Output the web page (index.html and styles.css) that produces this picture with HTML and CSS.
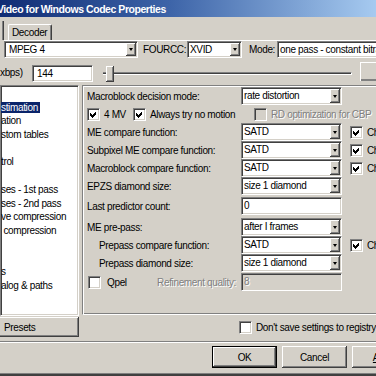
FILE: index.html
```html
<!DOCTYPE html>
<html>
<head>
<meta charset="utf-8">
<link rel="stylesheet" href="styles.css">
</head>
<body>
<div class="win">
  <div class="title"><span class="title-text">Video for Windows Codec Properties</span></div>
  <div class="tabs">
    <div class="tab sel"></div>
    <div class="tab dec">Decoder</div>
  </div>
  <div class="pageline"></div>

  <div class="row1">
    <div class="combo w-mpeg"><span class="txt pad4">MPEG 4</span><span class="dd"></span></div>
    <span class="lbl l-fourcc">FOURCC:</span>
    <div class="combo w-xvid"><span class="txt">XVID</span><span class="dd"></span></div>
    <span class="lbl l-mode">Mode:</span>
    <div class="combo w-mode"><span class="txt">one pass - constant bitrate</span></div>
  </div>

  <div class="row2">
    <span class="lbl l-kbps">xbps)</span>
    <div class="edit w-bit"><span class="txt pad4">144</span></div>
    <div class="slider">
      <div class="track"></div>
      <div class="thumb"></div>
    </div>
    <div class="pbtn"></div>
  </div>

  <div class="main">
    <div class="tree">
      <div class="item"></div>
      <div class="item"><span class="selbox">stimation</span></div>
      <div class="item">ation</div>
      <div class="item">stom tables</div>
      <div class="item"></div>
      <div class="item">trol</div>
      <div class="item"></div>
      <div class="item">ses - 1st pass</div>
      <div class="item">ses - 2nd pass</div>
      <div class="item">ve compression</div>
      <div class="item">&nbsp;compression</div>
      <div class="item"></div>
      <div class="item"></div>
      <div class="item">s</div>
      <div class="item">alog &amp; paths</div>
    </div>

    <div class="frame">
      <div class="prow">
        <span class="plbl">Macroblock decision mode:</span>
        <div class="combo w-c"><span class="txt">rate distortion</span><span class="dd"></span></div>
      </div>
      <div class="prow checks">
        <span class="cb on"><svg width="7" height="7" viewBox="0 0 7 7"><path d="M0 2 L2 4 L6 0 L6 3 L2 7 L0 5 Z"/></svg></span>
        <span class="ctext c1">4 MV</span>
        <span class="cb on"><svg width="7" height="7" viewBox="0 0 7 7"><path d="M0 2 L2 4 L6 0 L6 3 L2 7 L0 5 Z"/></svg></span>
        <span class="ctext c2">Always try no motion</span>
        <span class="cb off dis"></span>
        <span class="ctext disabled">RD optimization for CBP</span>
      </div>
      <div class="prow">
        <span class="plbl">ME compare function:</span>
        <div class="combo w-c"><span class="txt">SATD</span><span class="dd"></span></div>
        <span class="cb on side"><svg width="7" height="7" viewBox="0 0 7 7"><path d="M0 2 L2 4 L6 0 L6 3 L2 7 L0 5 Z"/></svg></span>
        <span class="ctext">Chroma</span>
      </div>
      <div class="prow">
        <span class="plbl">Subpixel ME compare function:</span>
        <div class="combo w-c"><span class="txt">SATD</span><span class="dd"></span></div>
        <span class="cb on side"><svg width="7" height="7" viewBox="0 0 7 7"><path d="M0 2 L2 4 L6 0 L6 3 L2 7 L0 5 Z"/></svg></span>
        <span class="ctext">Chroma</span>
      </div>
      <div class="prow">
        <span class="plbl">Macroblock compare function:</span>
        <div class="combo w-c"><span class="txt">SATD</span><span class="dd"></span></div>
        <span class="cb on side"><svg width="7" height="7" viewBox="0 0 7 7"><path d="M0 2 L2 4 L6 0 L6 3 L2 7 L0 5 Z"/></svg></span>
        <span class="ctext">Chroma</span>
      </div>
      <div class="prow">
        <span class="plbl">EPZS diamond size:</span>
        <div class="combo w-c"><span class="txt">size 1 diamond</span><span class="dd"></span></div>
      </div>
      <div class="prow g-edit">
        <span class="plbl">Last predictor count:</span>
        <div class="edit w-c"><span class="txt">0</span></div>
      </div>
      <div class="prow g-pre">
        <span class="plbl">ME pre-pass:</span>
        <div class="combo w-c"><span class="txt">after I frames</span><span class="dd"></span></div>
      </div>
      <div class="prow">
        <span class="plbl ind">Prepass compare function:</span>
        <div class="combo w-c"><span class="txt">SATD</span><span class="dd"></span></div>
        <span class="cb on side"><svg width="7" height="7" viewBox="0 0 7 7"><path d="M0 2 L2 4 L6 0 L6 3 L2 7 L0 5 Z"/></svg></span>
        <span class="ctext">Chroma</span>
      </div>
      <div class="prow">
        <span class="plbl ind">Prepass diamond size:</span>
        <div class="combo w-c"><span class="txt">size 1 diamond</span><span class="dd"></span></div>
      </div>
      <div class="prow g-qpel">
        <div class="qcol">
          <span class="cb off"></span>
          <span class="ctext qpel">Qpel</span>
          <span class="ctext disabled refq">Refinement quality:</span>
        </div>
        <div class="edit w-c dis"><span class="txt disabled">8</span></div>
      </div>
    </div>
  </div>

  <div class="row3">
    <div class="btn presets">Presets</div>
    <span class="cb off reg"></span>
    <span class="ctext">Don't save settings to registry</span>
  </div>

  <div class="sep"></div>

  <div class="buttons">
    <div class="btn def">OK</div>
    <div class="btn">Cancel</div>
    <div class="btn"><u>A</u>pply</div>
  </div>

  <div class="frame-bottom"></div>
</div>
</body>
</html>
```

FILE: styles.css
```css
* { box-sizing: border-box; }

html, body {
  margin: 0;
  padding: 0;
}

body {
  width: 376px;
  height: 376px;
  overflow: hidden;
  background: #D4D0C8;
  font-family: "Liberation Sans", Arial, sans-serif;
  font-size: 10px;
  letter-spacing: -0.35px;
  color: #000;
}

.win {
  width: 376px;
  height: 376px;
  display: flex;
  flex-direction: column;
  overflow: hidden;
}

/* title bar */
.title {
  height: 17px;
  flex: none;
  background: linear-gradient(90deg, #102C74 0%, #3D64A8 45%, #A6CAF0 100%);
  color: #fff;
  font-weight: bold;
  font-size: 10.5px;
  line-height: 18px;
  white-space: nowrap;
  overflow: hidden;
  letter-spacing: -0.45px;
}
.title-text { display: inline-block; margin-left: -3px; }

/* tabs */
.tabs {
  height: 23px;
  flex: none;
  display: flex;
  align-items: flex-end;
}
.tab.sel {
  width: 4px;
  height: 19px;
  border-right: 1px solid #404040;
  box-shadow: inset -1px 0 #808080;
}
.tab.dec {
  margin-left: 4px;
  width: 44px;
  height: 16px;
  border-left: 1px solid #fff;
  border-top: 1px solid #fff;
  border-right: 1px solid #404040;
  border-top-left-radius: 2px;
  border-top-right-radius: 2px;
  box-shadow: inset -1px 0 #808080;
  padding-left: 3px;
  line-height: 15px;
  white-space: nowrap;
}
.pageline {
  height: 1px;
  flex: none;
  margin-left: 4px;
  background: #fff;
}

/* generic controls */
.combo, .edit {
  display: flex;
  flex: none;
  height: 18px;
  padding: 1px;
  border: 1px solid;
  border-color: #808080 #fff #fff #808080;
  box-shadow: inset 1px 1px #404040, inset -1px -1px #D4D0C8;
  background: #fff;
  overflow: hidden;
}
.edit.dis { background: #D4D0C8; }
.txt {
  flex: 1;
  padding-left: 1px;
  line-height: 14px;
  white-space: nowrap;
  overflow: hidden;
}
.txt.pad4 { padding-left: 3px; }
.dd {
  flex: none;
  width: 10px;
  height: 14px;
  background: #D4D0C8;
  box-shadow: inset -1px -1px #404040, inset 1px 1px #fff, inset -2px -2px #808080;
  display: flex;
  align-items: center;
  justify-content: center;
}
.dd::after {
  content: "";
  width: 0;
  height: 0;
  border-left: 2.5px solid transparent;
  border-right: 2.5px solid transparent;
  border-top: 3px solid #000;
  margin-left: -1px;
}
.lbl {
  flex: none;
  white-space: nowrap;
  line-height: 17px;
}
.disabled {
  color: #808080;
  text-shadow: 1px 1px 0 #fff;
}

.cb {
  flex: none;
  width: 13px;
  height: 13px;
  border: 1px solid;
  border-color: #808080 #fff #fff #808080;
  box-shadow: inset 1px 1px #404040, inset -1px -1px #D4D0C8;
  background: #fff;
  display: flex;
  align-items: center;
  justify-content: center;
}
.cb.dis { background: #D4D0C8; }
.cb svg { display: block; fill: #000; shape-rendering: crispEdges; }
.ctext {
  flex: none;
  white-space: nowrap;
  margin-left: 4px;
}

.btn {
  flex: none;
  height: 22px;
  background: #D4D0C8;
  box-shadow: inset -1px -1px #404040, inset 1px 1px #fff, inset -2px -2px #808080;
  display: flex;
  align-items: center;
  justify-content: center;
  white-space: nowrap;
}
.btn.def {
  border: 1px solid #000;
}

/* row 1 */
.row1 {
  flex: none;
  display: flex;
  align-items: center;
  height: 17px;
  margin-left: 4px;
}
.row1 .combo { height: 17px; }
.row1 .txt { line-height: 13px; }
.row1 .dd { height: 13px; }
.w-mpeg { width: 134px; }
.l-fourcc { width: 49px; padding-left: 5px; }
.w-xvid { width: 55px; }
.l-mode { width: 35px; padding-left: 7px; }
.w-mode { width: 120px; }

/* row 2 */
.row2 {
  flex: none;
  display: flex;
  align-items: flex-start;
  height: 21px;
  margin-top: 4px;
}
.l-kbps { width: 32px; margin-top: 2px; }
.w-bit { width: 61px; height: 17px; margin-top: 3px; }
.w-bit .txt { line-height: 13px; }
.slider {
  flex: none;
  position: relative;
  width: 249px;
  height: 21px;
  margin-left: 10px;
}
.track {
  margin-top: 10px;
  height: 3px;
  background: #404040;
  border-top: 1px solid #808080;
  border-bottom: 1px solid #fff;
  border-right: 1px solid #fff;
}
.thumb {
  position: absolute;
  left: 3px;
  top: 4px;
  width: 8px;
  height: 16px;
  background: #D4D0C8;
  box-shadow: inset -1px -1px #404040, inset 1px 1px #fff, inset -2px -2px #808080;
}
.pbtn {
  flex: none;
  width: 30px;
  height: 19px;
  margin-left: 8px;
  background: #D4D0C8;
  box-shadow: inset 1px 1px #fff, inset -2px -2px #808080;
}

/* main area */
.main {
  flex: none;
  display: flex;
  height: 231px;
  margin-top: 2px;
}
.tree {
  flex: none;
  width: 79px;
  height: 231px;
  border: 1px solid;
  border-color: #808080 #fff #fff #808080;
  box-shadow: inset 1px 1px #404040, inset -1px -1px #D4D0C8;
  background: #fff;
  padding-top: 1px;
  overflow: hidden;
}
.item {
  height: 13.7px;
  line-height: 13.7px;
  white-space: nowrap;
}
.selbox {
  display: inline-block;
  background: #0A246A;
  color: #fff;
  padding-right: 2px;
  line-height: 11px;
}

.frame {
  flex: none;
  width: 310px;
  height: 230px;
  margin-left: 3px;
  border: 1px solid;
  border-color: #808080 #fff #fff #808080;
  box-shadow: inset 1px 1px #fff, inset -1px -1px #808080;
  padding: 1px 0 0 4px;
  display: flex;
  flex-direction: column;
}
.prow {
  flex: none;
  display: flex;
  align-items: center;
  height: 18px;
}
.plbl {
  flex: none;
  width: 154px;
  white-space: nowrap;
}
.plbl.ind { padding-left: 12px; }
.w-c { width: 101px; }
.cb.side { margin-left: 8px; }
.c1 { width: 29px; }
.c2 { width: 104px; }
.checks .ctext { margin-left: 4px; }
.g-edit { margin-top: 2px; }
.g-pre { margin-top: 3px; }
.g-qpel { margin-top: 1px; }
.qcol {
  flex: none;
  width: 154px;
  display: flex;
  align-items: center;
}
.qcol .cb { margin-left: 1px; }
.qpel { margin-left: 6px; }
.refq { margin-left: auto; margin-right: 5px; }

/* row 3 */
.row3 {
  flex: none;
  display: flex;
  align-items: center;
  height: 20px;
  margin-top: 1px;
}
.presets {
  width: 81px;
  height: 20px;
  margin-left: -2px;
  justify-content: flex-start;
  padding-left: 6px;
}
.cb.reg { margin-left: 160px; }

.sep {
  flex: none;
  height: 2px;
  margin-top: 4px;
  border-top: 1px solid #808080;
  border-bottom: 1px solid #fff;
}

.buttons {
  flex: none;
  display: flex;
  height: 22px;
  margin-top: 3px;
  padding-left: 212px;
}
.buttons .btn { width: 65px; margin-right: 5px; }

.frame-bottom {
  flex: none;
  margin-top: auto;
  height: 3px;
  border-top: 1px solid #808080;
  background: #404040;
}
```
